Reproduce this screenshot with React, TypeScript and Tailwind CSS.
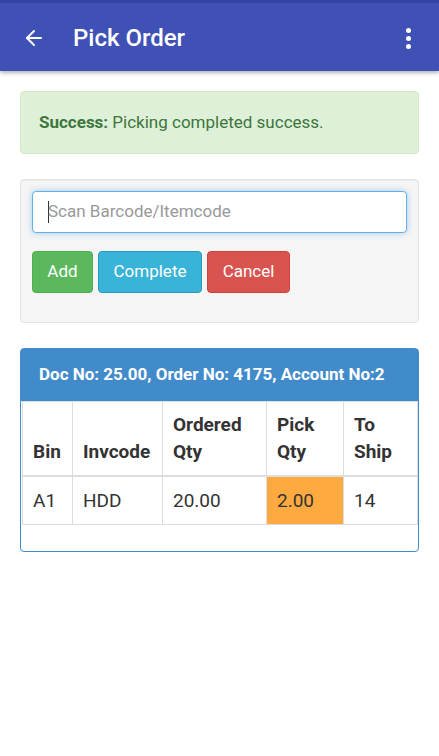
import { ArrowLeft } from 'lucide-react'

const cols = [
  { label: ['Bin'], w: 'w-[50px]' },
  { label: ['Invcode'], w: 'w-[90px]' },
  { label: ['Ordered', 'Qty'], w: 'w-[104px]' },
  { label: ['Pick', 'Qty'], w: 'w-[77px]' },
  { label: ['To', 'Ship'], w: 'w-[74px]' },
]

const rows = [{ bin: 'A1', inv: 'HDD', ordered: '20.00', pick: '2.00', ship: '14' }]

export default function App() {
  return (
    <div className="min-h-[756px] bg-white text-[#333] font-['Roboto','Noto_Sans',sans-serif]">
      {/* status bar strip + app bar */}
      <div className="h-[3px] bg-[#3443a8]" />
      <div className="flex h-[68px] items-center bg-[#3f51b5] px-[22px] pt-[2px] text-white shadow-[0_2px_4px_rgba(0,0,0,0.3)]">
        <ArrowLeft size={24} strokeWidth={2} />
        <h1 className="ml-[27px] flex-1 text-[24px] font-medium">Pick Order</h1>
        <div className="flex flex-col items-center gap-[3px] pr-[6px]">
          <span className="h-[5px] w-[5px] rounded-full bg-white" />
          <span className="h-[5px] w-[5px] rounded-full bg-white" />
          <span className="h-[5px] w-[5px] rounded-full bg-white" />
        </div>
      </div>

      <div className="px-5 pt-[20px]">
        {/* alert */}
        <div className="flex h-[63px] items-center rounded-[4px] border border-[#d6e9c6] bg-[#dff0d8] px-[18px] text-[17px] text-[#3c763d]">
          <p><b>Success:</b> Picking completed success.</p>
        </div>

        {/* scan well */}
        <div className="mt-[25px] rounded-[4px] border border-[#e3e3e3] bg-[#f5f5f5] px-[11px] pt-[11px] pb-[29px] shadow-[inset_0_1px_1px_rgba(0,0,0,0.05)]">
          <div className="flex h-[42px] items-center rounded-[4px] border border-[#66afe9] bg-white px-[15px] shadow-[0_0_6px_rgba(102,175,233,0.6)]">
            <span className="mr-[-1px] h-[22px] w-[1px] bg-[#333]" />
            <span className="text-[17px] text-[#999]">Scan Barcode/Itemcode</span>
          </div>
          <div className="mt-[18px] flex gap-[5px] text-[17px] text-white">
            <button className="h-[42px] w-[61px] rounded-[4px] border border-[#4cae4c] bg-[#5cb85c]">Add</button>
            <button className="h-[42px] w-[104px] rounded-[4px] border border-[#269abc] bg-[#39b3d7]">Complete</button>
            <button className="h-[42px] w-[83px] rounded-[4px] border border-[#d43f3a] bg-[#d9534f]">Cancel</button>
          </div>
        </div>

        {/* order panel */}
        <div className="mt-[25px] rounded-[4px] border border-[#428bca] bg-white pb-[26px]">
          <div className="flex h-[52px] items-center bg-[#428bca] px-[18px] text-[17px] font-bold text-white">
            Doc No: 25.00, Order No: 4175, Account No:2
          </div>
          <table className="ml-[1px] table-fixed border-collapse border border-[#ddd] text-[19px]">
            <thead>
              <tr>
                {cols.map((c) => (
                  <th key={c.label.join()} className={`${c.w} border border-b-2 border-[#ddd] px-[10px] pt-[9px] pb-[10px] text-left align-bottom font-bold leading-[27px]`}>
                    {c.label.map((l) => (
                      <div key={l}>{l}</div>
                    ))}
                  </th>
                ))}
              </tr>
            </thead>
            <tbody>
              {rows.map((r) => (
                <tr key={r.bin}>
                  <td className="border border-[#ddd] px-[10px] py-[10px] leading-[27px]">{r.bin}</td>
                  <td className="border border-[#ddd] px-[10px] py-[10px] leading-[27px]">{r.inv}</td>
                  <td className="border border-[#ddd] px-[10px] py-[10px] leading-[27px]">{r.ordered}</td>
                  <td className="border border-[#ddd] bg-[#ffaa40] px-[10px] py-[10px] leading-[27px]">{r.pick}</td>
                  <td className="border border-[#ddd] px-[10px] py-[10px] leading-[27px]">{r.ship}</td>
                </tr>
              ))}
            </tbody>
          </table>
        </div>
      </div>
    </div>
  )
}
